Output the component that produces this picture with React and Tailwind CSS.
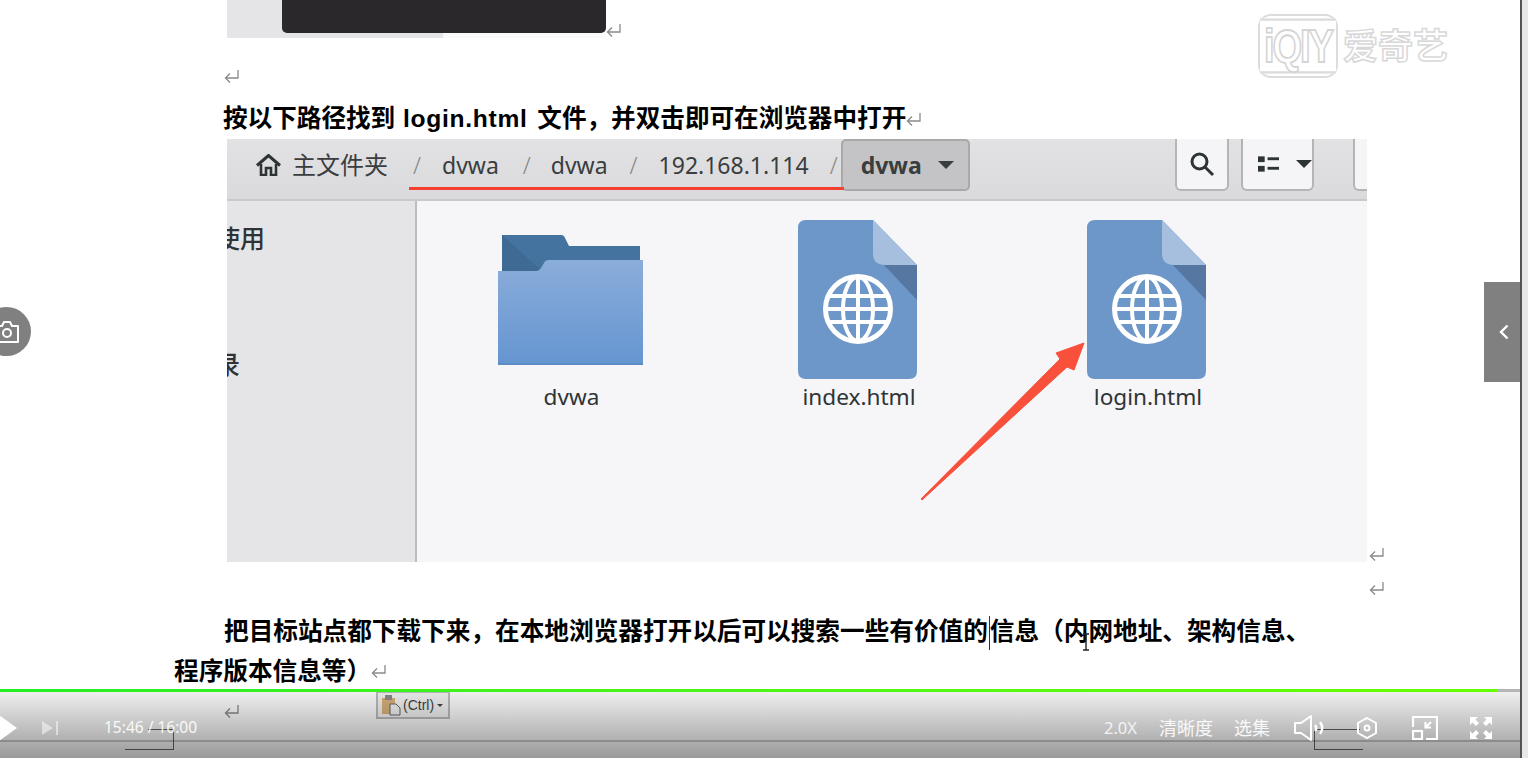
import React from "react";

function ReturnMark({ className = "" }) {
  return (
    <svg className={`inline-block shrink-0 ${className}`} width="15" height="14" viewBox="0 0 15 14" fill="none" stroke="#8a8a8a" strokeWidth="1.3">
      <path d="M14 1v8H1.5" />
      <path d="M6 4.5 1.5 9 6 13.5" />
    </svg>
  );
}

function FolderIcon() {
  return (
    <svg width="145" height="160" viewBox="0 0 145 160">
      <defs>
        <linearGradient id="folderFront" x1="0" y1="0" x2="0" y2="1">
          <stop offset="0" stopColor="#8badda" />
          <stop offset="1" stopColor="#6595d0" />
        </linearGradient>
      </defs>
      <path d="M4 15H63Q66 15 67 18L71 26H142V60H4Z" fill="#44739f" />
      <path d="M4 15V60H40L45 52Z" fill="#3f6a94" />
      <path d="M0 51H39Q41 51 43 48L46 43Q47 40 51 40H145V144H0Z" fill="url(#folderFront)" />
      <rect x="0" y="143" width="145" height="2" fill="#5d8cc4" />
    </svg>
  );
}

function HtmlIcon() {
  return (
    <svg width="119" height="160" viewBox="0 0 119 160">
      <path d="M8 0H75L119 45V151Q119 159 111 159H8Q0 159 0 151V8Q0 0 8 0Z" fill="#6c97c8" />
      <path d="M75 0 119 45H87Q75 45 75 33Z" fill="#a6bfde" />
      <path d="M86 45H119V80Z" fill="#5777a3" />
      <g fill="none" stroke="#fff">
        <circle cx="60" cy="89" r="32.5" strokeWidth="5" />
        <ellipse cx="60" cy="89" rx="15" ry="32" strokeWidth="4" />
        <path d="M60 57V121M28 89H92M32 76H88M32 102H88" strokeWidth="4" />
      </g>
    </svg>
  );
}

function FileItem({ icon, label }) {
  return (
    <div className="flex flex-col items-center">
      {icon}
      <div className="h-[34px] pl-[3px] text-[22.6px] leading-[34px] text-[#2e3436]">{label}</div>
    </div>
  );
}

export default function App() {
  return (
    <div className="relative flex h-[758px] w-[1528px] overflow-hidden bg-white font-['Liberation_Sans','Noto_Sans_CJK_SC',sans-serif]">
      {/* doc page */}
      <div className="flex h-full w-[1520px] flex-col">
        <div className="ml-[227px] flex h-[38px] items-start">
          <div className="h-[38px] w-[379px] bg-[linear-gradient(to_right,#e5e5e7_216px,#fafafa_216px)]">
            <div className="ml-[55px] h-[33px] w-[324px] rounded-b-[5px] bg-[#2a282b]" />
          </div>
          <ReturnMark className="mt-[23px]" />
        </div>
        <div className="ml-[224px] mt-[29px] h-[14px] leading-none">
          <ReturnMark />
        </div>
        <div className="ml-[223px] mt-[18px] flex h-[40px] items-center whitespace-pre text-[24.6px] font-bold leading-[40px] text-black">
          按以下路径找到 <span className="ml-[1px] tracking-[0.7px]">login.html</span><span className="ml-[3px]"> 文件，并双击即可在浏览器中打开</span>
          <ReturnMark />
        </div>

        {/* file manager screenshot */}
        <div className="ml-[227px] flex items-end">
          <div className="flex h-[423px] w-[1140px] flex-col overflow-hidden font-['Noto_Sans','Noto_Sans_CJK_SC',sans-serif] text-[#3a3d3e]">
            <div className="relative flex h-[62px] shrink-0 items-start border-b-2 border-[#c9c9c9] bg-gradient-to-b from-[#e2e2e4] to-[#dadadc] text-[23px]">
              <div className="ml-[29px] flex h-[52px] shrink-0 items-center whitespace-nowrap">
                <svg className="shrink-0" width="25" height="22" viewBox="0 0 25 22" fill="none" stroke="#2e3436">
                  <path d="M1 11.5 12.5 1.5 24 11.5" strokeWidth="3" />
                  <path d="M5 10V21H10V14H15V21H20V10" strokeWidth="2.6" />
                </svg>
                <span className="ml-[11px] w-[97px] text-[24px]">主文件夹</span>
                <span className="ml-[24px] font-light text-[#888]">/</span>
                <span className="ml-[21px]">dvwa</span>
                <span className="ml-[24px] font-light text-[#888]">/</span>
                <span className="ml-[20px]">dvwa</span>
                <span className="ml-[22px] font-light text-[#888]">/</span>
                <span className="ml-[21px]">192.168.1.114</span>
                <span className="ml-[21px] font-light text-[#888]">/</span>
              </div>
              <div className="ml-[3px] flex h-[52px] w-[129px] shrink-0 items-center rounded-[5px] border-2 border-[#a9a9a9] bg-[#c4c4c6] pl-[18px] font-bold">
                <span>dvwa</span>
                <span className="ml-[16px] h-0 w-0 border-x-[8px] border-t-[8px] border-x-transparent border-t-[#3a3d3e]" />
              </div>
              <div className="ml-[205px] flex h-[52px] w-[54px] shrink-0 items-center justify-center rounded-b-[6px] border-2 border-t-0 border-[#b5b5b5] bg-[#f5f5f7]">
                <svg width="26" height="26" viewBox="0 0 26 26" fill="none" stroke="#2e3436" strokeWidth="3">
                  <circle cx="10.5" cy="10.5" r="7.5" />
                  <path d="m16 16 8 8" />
                </svg>
              </div>
              <div className="ml-[12px] flex h-[52px] w-[73px] shrink-0 items-center rounded-b-[6px] border-2 border-t-0 border-[#b5b5b5] bg-[#f5f5f7] pl-[15px]">
                <svg width="22" height="16" viewBox="0 0 22 16" fill="#2e3436">
                  <rect width="7" height="6" />
                  <rect y="10" width="7" height="6" />
                  <rect x="10" y="1" width="12" height="3" />
                  <rect x="10" y="11" width="12" height="3" />
                </svg>
                <span className="ml-[17px] h-0 w-0 border-x-[8px] border-t-[8px] border-x-transparent border-t-[#2e3436]" />
              </div>
              <div className="ml-[39px] h-[52px] w-[15px] shrink-0 rounded-bl-[6px] border-2 border-t-0 border-r-0 border-[#b5b5b5] bg-[#f5f5f7]" />
              {/* red underline annotation */}
              <div className="absolute left-[182px] top-[48px] h-[3px] w-[435px] bg-[#f5402f]" />
            </div>

            <div className="flex min-h-0 flex-1">
              <div className="w-[190px] shrink-0 overflow-hidden border-r-2 border-[#bcbcbc] bg-[#e5e5e7] text-[25px] font-medium text-[#2e3436]">
                <div className="-ml-[12px] mt-[19px] leading-[36px]">使用</div>
                <div className="-ml-[12px] mt-[90px] leading-[36px]">录</div>
              </div>
              <div className="grid flex-1 grid-cols-[288px_287px_291px] content-start bg-[#f6f5f8] pl-[9px] pt-[19px]">
                <FileItem icon={<FolderIcon />} label="dvwa" />
                <FileItem icon={<HtmlIcon />} label="index.html" />
                <FileItem icon={<HtmlIcon />} label="login.html" />
              </div>
            </div>
          </div>
          <ReturnMark className="mb-[1px] ml-[2px]" />
        </div>

        <div className="ml-[1369px] mt-[17px] h-[14px] leading-none">
          <ReturnMark />
        </div>

        <div className="relative ml-[174px] mt-[19px] w-[1146px] indent-[50px] text-[24.65px] font-bold leading-[40px] text-black">
          把目标站点都下载下来，在本地浏览器打开以后可以搜索一些有价值的
          <span className="ml-[1px] inline-block h-[34px] w-px bg-[#333] align-middle" />
          信息（内网地址、架构信息、程序版本信息等）
          <ReturnMark className="-translate-y-[2px]" />
          {/* mouse i-beam */}
          <svg className="absolute left-[907px] top-[21px]" width="10" height="18" viewBox="0 0 10 18" fill="none" stroke="#222" strokeWidth="1.4">
            <path d="M2 1H8M5 1V17M2 17H8" />
          </svg>
        </div>

        <div className="relative min-h-0 flex-1">
          <ReturnMark className="absolute left-[224px] top-[12px]" />
          <div className="absolute -top-[1px] left-[376px] flex h-[28px] w-[74px] items-center border-2 border-[#bdbdbd] bg-[#f4f4f4] pl-[3px] text-[14px] text-[#444]">
            <svg width="20" height="22" viewBox="0 0 20 22">
              <rect x="1" y="4" width="13" height="16" fill="#dcb27a" />
              <rect x="4" y="1" width="7" height="5" fill="#8d8d8d" />
              <path d="M9 10h6l4 4v7H9Z" fill="#f4f4f4" stroke="#666" />
            </svg>
            <span className="ml-[2px]">(Ctrl)</span>
            <span className="ml-[3px] h-0 w-0 border-x-[3px] border-t-[3px] border-x-transparent border-t-[#444]" />
          </div>
          {/* stray table lines */}
          <div className="absolute left-[148px] top-[37px] h-px w-[26px] bg-[#666]" />
          <div className="absolute left-[173px] top-[37px] h-[21px] w-px bg-[#666]" />
          <div className="absolute left-[125px] top-[57px] h-px w-[49px] bg-[#666]" />
          <div className="absolute left-[1314px] top-[37px] h-px w-[46px] bg-[#666]" />
          <div className="absolute left-[1314px] top-[37px] h-[21px] w-px bg-[#666]" />
          <div className="absolute left-[1314px] top-[57px] h-px w-[49px] bg-[#666]" />
        </div>
      </div>

      <div className="h-full w-[2px] shrink-0 bg-[#555]" />
      <div className="h-full flex-1 bg-[#e8e8e8]" />

      {/* red arrow annotation */}
      <svg className="absolute left-[915px] top-[335px]" width="180" height="170" viewBox="0 0 180 170">
        <path d="M6 164 145 24 141 18 169 8 159 35 152 32 7 165Z" fill="#f8503a" stroke="#f8503a" strokeLinejoin="round" />
      </svg>

      {/* watermark */}
      <div className="absolute left-[1258px] top-[14px] flex items-center">
        <div className="relative flex h-[64px] w-[80px] items-center justify-center rounded-[13px] border-2 border-[#dcdcdc]">
          <div className="flex h-[46px] w-[80px] scale-y-[1.2] items-center justify-center border-x-0 border-y-2 border-[#dcdcdc] bg-white font-['Liberation_Sans'] text-[38px] font-bold leading-none tracking-[-2px] text-white [-webkit-text-stroke:1.5px_#d4d4d4]">
            iQIY
          </div>
        </div>
        <div className="mb-[6px] ml-[5px] font-['Noto_Sans_CJK_SC'] text-[35px] font-bold leading-none text-white [-webkit-text-stroke:1.5px_#d8d8d8]">
          爱奇艺
        </div>
      </div>

      {/* screenshot button */}
      <div className="absolute -left-[18px] top-[307px] flex h-[49px] w-[49px] items-center justify-center rounded-full bg-[#808080]">
        <svg width="26" height="22" viewBox="0 0 26 22" fill="none" stroke="#fff" strokeWidth="2">
          <path d="M2 5H8L10 1H16L18 5H24V21H2Z" strokeLinejoin="round" />
          <circle cx="13" cy="12" r="4" />
        </svg>
      </div>

      {/* side panel toggle */}
      <div className="absolute left-[1484px] top-[282px] flex h-[100px] w-[36px] items-center justify-center bg-[#808080]">
        <svg className="ml-[3px]" width="10" height="16" viewBox="0 0 10 16" fill="none" stroke="#fff" strokeWidth="2.4">
          <path d="M8.5 1.5 2 8l6.5 6.5" />
        </svg>
      </div>

      {/* player bar */}
      <div className="absolute bottom-0 left-0 flex h-[69px] w-[1520px] flex-col bg-gradient-to-b from-black/5 to-black/40 text-white">
        <div className="h-[3px] w-full bg-[#b5b5b5]">
          <div className="h-full w-[1498px] bg-gradient-to-r from-[#22ee22] to-[#66ff00]" />
        </div>
        <div className="relative flex h-[50px] items-center border-b-2 border-black/20 pt-[24px] text-[17px] font-['Noto_Sans','Noto_Sans_CJK_SC',sans-serif]">
          <svg className="-ml-[1px] shrink-0" width="18" height="26" viewBox="0 0 18 26" fill="#fff">
            <path d="M0 0 18 13 0 26Z" />
          </svg>
          <svg className="ml-[25px] shrink-0" width="17" height="14" viewBox="0 0 17 14" fill="#fff" opacity=".5">
            <path d="M0 0 11 7 0 14Z" />
            <rect x="14" width="2" height="14" />
          </svg>
          <span className="ml-[45px] w-[94px] whitespace-nowrap text-[15.5px] text-white/90">15:46 / 16:00</span>
          <span className="ml-[906px] w-[35px] text-[16.5px] text-white/80">2.0X</span>
          <span className="ml-[20px] w-[54px] text-[18px] leading-none text-white/90">清晰度</span>
          <span className="ml-[21px] w-[37px] text-[18px] leading-none text-white/90">选集</span>
          <svg className="ml-[23px] shrink-0" width="32" height="26" viewBox="0 0 32 26" fill="none" stroke="#fff" strokeWidth="2.4">
            <path d="M1 8H7L17 1V25L7 18H1Z" strokeWidth="2" strokeLinejoin="round" />
            <path d="M21 10Q23.5 13 21 16" />
            <path d="M26 7Q30.5 13 26 19" />
          </svg>
          <svg className="ml-[31px] shrink-0" width="20" height="22" viewBox="0 0 20 22" fill="none" stroke="#fff" strokeWidth="2">
            <path d="M10 1 19 6V16L10 21 1 16V6Z" />
            <circle cx="10" cy="11" r="2.5" />
          </svg>
          <svg className="ml-[35px] shrink-0" width="26" height="24" viewBox="0 0 26 24" fill="none" stroke="#fff" strokeWidth="2.2">
            <path d="M1 11V1H25V23H14" />
            <rect x="1" y="15" width="9" height="8" />
            <path d="M19 6 14 11M13.5 6V11.5H19" />
          </svg>
          <svg className="ml-[32px] shrink-0" width="22" height="22" viewBox="0 0 22 22" fill="#fff">
            <path d="M0 0H8L5.5 2.5 9 6 6 9 2.5 5.5 0 8Z" />
            <path d="M22 0H14L16.5 2.5 13 6 16 9 19.5 5.5 22 8Z" />
            <path d="M0 22H8L5.5 19.5 9 16 6 13 2.5 16.5 0 14Z" />
            <path d="M22 22H14L16.5 19.5 13 16 16 13 19.5 16.5 22 14Z" />
          </svg>
        </div>
      </div>
    </div>
  );
}
